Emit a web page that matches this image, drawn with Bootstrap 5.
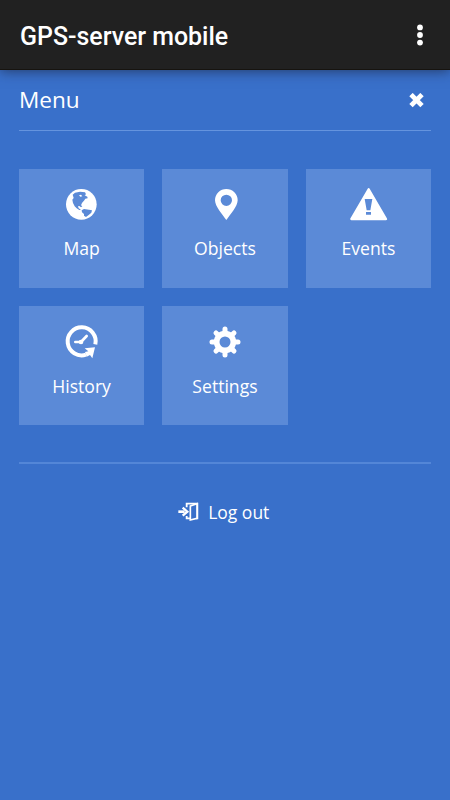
<!DOCTYPE html>
<html lang="en">
<head>
<meta charset="utf-8">
<meta name="viewport" content="width=device-width, initial-scale=1">
<title>GPS-server mobile</title>
<link href="https://cdn.jsdelivr.net/npm/bootstrap@5.3.0/dist/css/bootstrap.min.css" rel="stylesheet">
<style>
  :root { --page: #3970ca; --tile: #5b8ad7; }
  body { background: var(--page); font-family: "Open Sans", sans-serif; color: #fff; }
  .app-bar { height: 70px; background: #212121; border-bottom: 1px solid #17140f; box-shadow: 0 1px 12px rgba(30, 40, 70, .75); padding: 0 19px 0 20px; }
  .app-title { font: 500 25.6px/1 Roboto, sans-serif; padding-top: 5px; }
  .app-title span { display: inline-block; transform: scaleX(.974); transform-origin: left; }
  .panel { padding: 0 19px; }
  .panel-head { height: 61px; border-bottom: 1px solid #6594de; }
  .panel-title { font-size: 22.6px; line-height: 1; }
  .close-link { margin-right: 7px; }
  .tiles { display: grid; grid-template-columns: repeat(3, 1fr); gap: 18.3px 18.2px; padding: 38px 0 36.7px; border-bottom: 2px solid #5386d7; }
  .tile { height: 119px; background: var(--tile); padding-top: 11px; font-size: 17.6px; line-height: 24px; }
  .tile svg { width: 50px; height: 50px; margin-bottom: 6.4px; }
  .shift-start { margin-right: 1.5px; }
  .shift-end { margin-left: 2px; }
  .logout { font-size: 17.5px; line-height: 24px; padding-top: 36px; padding-right: 2.5px; gap: 9px; }
  .cut { fill: var(--tile); }
</style>
</head>
<body>
<header class="app-bar d-flex align-items-center justify-content-between position-relative">
  <h1 class="app-title m-0"><span>GPS-server mobile</span></h1>
  <a href="#" class="d-flex" aria-label="More options">
    <svg width="22" height="22" viewBox="0 0 22 22" fill="#fff"><circle cx="11" cy="3.4" r="2.9"/><circle cx="11" cy="11" r="2.9"/><circle cx="11" cy="18.6" r="2.9"/></svg>
  </a>
</header>
<main class="panel">
  <div class="panel-head d-flex align-items-center justify-content-between">
    <h2 class="panel-title fw-normal m-0">Menu</h2>
    <a href="#" class="close-link d-flex" aria-label="Close">
      <svg width="15" height="15" viewBox="0 0 15 15" stroke="#fff" stroke-width="4.8"><path d="M2 1.6 13 12.6M13 1.6 2 12.6"/></svg>
    </a>
  </div>
  <nav class="tiles">
    <a href="#" class="tile d-flex flex-column align-items-center text-white text-decoration-none">
      <svg class="shift-start" viewBox="0 0 150 150" fill="#fff"><circle cx="76" cy="73" r="46"/>
        <path class="cut" d="M50 44 57 38 72 35 87 37 90 43 86 46 94 50 95 55 88 56 85 61 78 69 75 76 79 79 75 82 70 78 66 79 68 85 75 89 70 90 62 85 56 79 51 69 49 59 53 54Z"/>
        <path class="cut" d="M77 91 84 87 99 89 108 91 106 98 98 105 90 111 84 107 84 102 78 97Z"/>
        <path d="M69 46 75 44 79 49 73 50Z"/></svg>
      <span>Map</span>
    </a>
    <a href="#" class="tile d-flex flex-column align-items-center text-white text-decoration-none">
      <svg viewBox="0 0 150 150" fill="#fff" fill-rule="evenodd"><path d="M79 120C68 105 45 79 45 61a34 34 0 0 1 68 0c0 18-23 44-34 59ZM79 44a17 17 0 1 0 0 34 17 17 0 0 0 0-34Z"/></svg>
      <span>Objects</span>
    </a>
    <a href="#" class="tile d-flex flex-column align-items-center text-white text-decoration-none">
      <svg class="shift-end" viewBox="0 0 150 150" fill="#fff"><path d="M74 28 126 117H22Z" stroke="#fff" stroke-width="7" stroke-linejoin="round"/>
        <path class="cut" d="M62 57H85L79 91H68ZM66 96H81V104H66Z"/></svg>
      <span>Events</span>
    </a>
    <a href="#" class="tile d-flex flex-column align-items-center text-white text-decoration-none">
      <svg class="shift-start" viewBox="0 0 150 150" fill="none" stroke="#fff"><path d="M90 113A42 42 0 1 1 118 82" stroke-width="12"/><path d="M92 57 75 75" stroke-width="8" stroke-linecap="round"/><path d="M58 75H75" stroke-width="8" stroke-linecap="round"/><circle cx="75" cy="75" r="7" fill="#fff" stroke="none"/><path d="M86 94 117 91 109 124 102 114 92 119 87 105 97 103Z" fill="#fff" stroke="none"/></svg>
      <span>History</span>
    </a>
    <a href="#" class="tile d-flex flex-column align-items-center text-white text-decoration-none">
      <svg viewBox="0 0 150 150"><g fill="none" stroke="#fff"><circle cx="75" cy="75" r="25" stroke-width="17"/><path stroke-width="15" stroke-linecap="round" d="M75 43V36M75 107V114M43 75H36M107 75H114M52 52 48 48M98 98 102 102M98 52 102 48M52 98 48 102"/></g></svg>
      <span>Settings</span>
    </a>
  </nav>
  <a href="#" class="logout d-flex align-items-center justify-content-center text-white text-decoration-none">
    <svg width="21" height="20" viewBox="0 0 63 60" fill="none" stroke="#fff"><path d="M1 29H20" stroke-width="8"/><path d="M14 17 28 29 14 41" stroke-width="7"/><path d="M26 16V5H58V49H54M26 42V49H36" stroke-width="5.5"/><path d="M37 12 57 5V49L37 54Z" fill="#3970ca" stroke-width="5"/></svg>
    <span>Log out</span>
  </a>
</main>
<script src="https://cdn.jsdelivr.net/npm/bootstrap@5.3.0/dist/js/bootstrap.bundle.min.js"></script>
</body>
</html>
